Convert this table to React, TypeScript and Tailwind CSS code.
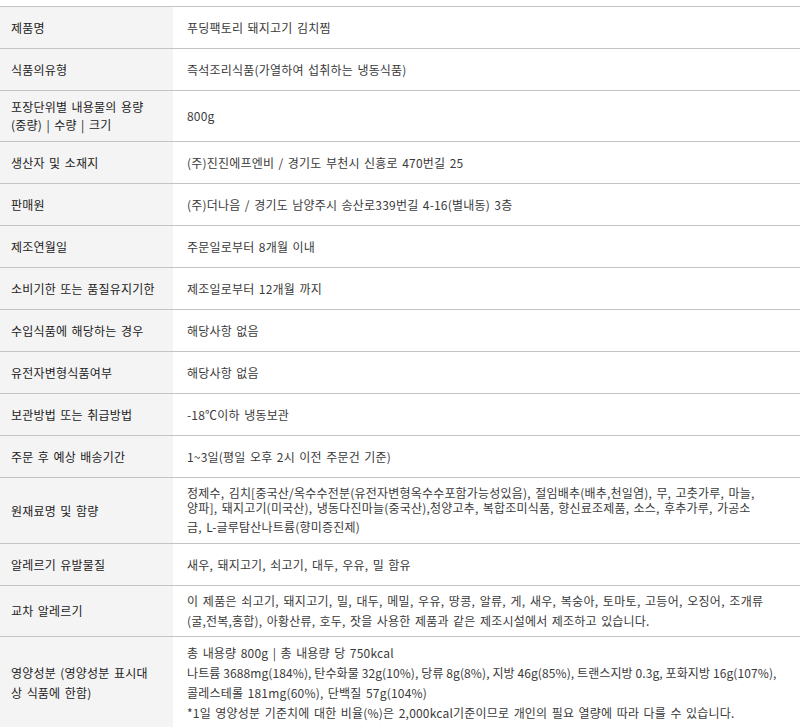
import React from "react";

type Row = {
  label: React.ReactNode;
  value: React.ReactNode;
  h: string;
};

const rows: Row[] = [
  { label: "제품명", value: "푸딩팩토리 돼지고기 김치찜", h: "h-[42px]" },
  { label: "식품의유형", value: "즉석조리식품(가열하여 섭취하는 냉동식품)", h: "h-[42px]" },
  {
    label: (
      <div className="leading-[18px]">
        포장단위별 내용물의 용량
        <br />
        (중량) | 수량 | 크기
      </div>
    ),
    value: "800g",
    h: "h-[51px]",
  },
  { label: "생산자 및 소재지", value: "(주)진진에프엔비 / 경기도 부천시 신흥로 470번길 25", h: "h-[42px]" },
  { label: "판매원", value: "(주)더나음 / 경기도 남양주시 송산로339번길 4-16(별내동) 3층", h: "h-[42px]" },
  { label: "제조연월일", value: "주문일로부터 8개월 이내", h: "h-[42px]" },
  { label: "소비기한 또는 품질유지기한", value: "제조일로부터 12개월 까지", h: "h-[42px]" },
  { label: "수입식품에 해당하는 경우", value: "해당사항 없음", h: "h-[42px]" },
  { label: "유전자변형식품여부", value: "해당사항 없음", h: "h-[42px]" },
  { label: "보관방법 또는 취급방법", value: "-18℃이하 냉동보관", h: "h-[42px]" },
  { label: "주문 후 예상 배송기간", value: "1~3일(평일 오후 2시 이전 주문건 기준)", h: "h-[42px]" },
  {
    label: "원재료명 및 함량",
    value: (
      <div className="whitespace-nowrap">
        <div className="leading-[15px]">
          정제수, 김치[중국산/옥수수전분(유전자변형옥수수포함가능성있음), 절임배추(배추,천일염), 무, 고춧가루, 마늘,
        </div>
        <div className="leading-[15px]">
          양파], 돼지고기(미국산), 냉동다진마늘(중국산),청양고추, 복합조미식품, 향신료조제품, 소스, 후추가루, 가공소
        </div>
        <div className="mt-[2px] leading-[20px]">금, L-글루탐산나트륨(향미증진제)</div>
      </div>
    ),
    h: "h-[66px]",
  },
  { label: "알레르기 유발물질", value: "새우, 돼지고기, 쇠고기, 대두, 우유, 밀 함유", h: "h-[42px]" },
  {
    label: "교차 알레르기",
    value: (
      <div className="whitespace-nowrap leading-[20px]">
        <div className="tracking-[0.3px]">
          이 제품은 쇠고기, 돼지고기, 밀, 대두, 메밀, 우유, 땅콩, 알류, 게, 새우, 복숭아, 토마토, 고등어, 오징어, 조개류
        </div>
        <div>(굴,전복,홍합), 아황산류, 호두, 잣을 사용한 제품과 같은 제조시설에서 제조하고 있습니다.</div>
      </div>
    ),
    h: "h-[51px]",
  },
  {
    label: (
      <div className="leading-[20px]">
        영양성분 (영양성분 표시대
        <br />상 식품에 한함)
      </div>
    ),
    value: (
      <div className="whitespace-nowrap leading-[20px]">
        <div>총 내용량 800g | 총 내용량 당 750kcal</div>
        <div className="tracking-[0.1px] [word-spacing:0px]">
          나트륨 3688mg(184%), 탄수화물 32g(10%), 당류 8g(8%), 지방 46g(85%), 트랜스지방 0.3g, 포화지방 16g(107%),
        </div>
        <div>콜레스테롤 181mg(60%), 단백질 57g(104%)</div>
        <div>*1일 영양성분 기준치에 대한 비율(%)은 2,000kcal기준이므로 개인의 필요 열량에 따라 다를 수 있습니다.</div>
      </div>
    ),
    h: "h-[93px]",
  },
];

export default function App() {
  return (
    <div
      className="w-[800px] bg-white pt-[6px] text-[12px] tracking-[0.2px] [word-spacing:1.5px]"
      style={{ fontFamily: '"Noto Sans CJK KR", "Noto Sans", sans-serif' }}
    >
      <div className="border-t border-[#c4c4c4]">
        {rows.map((row, i) => (
          <div key={i} className={`flex border-b border-[#c4c4c4] ${row.h}`}>
            <div className="flex w-[173px] shrink-0 items-center bg-[#f4f4f4] pl-[11px] text-[#222]">
              {row.label}
            </div>
            <div className="flex flex-1 items-center pl-[14px] text-[#3a3a3a]">{row.value}</div>
          </div>
        ))}
      </div>
    </div>
  );
}
